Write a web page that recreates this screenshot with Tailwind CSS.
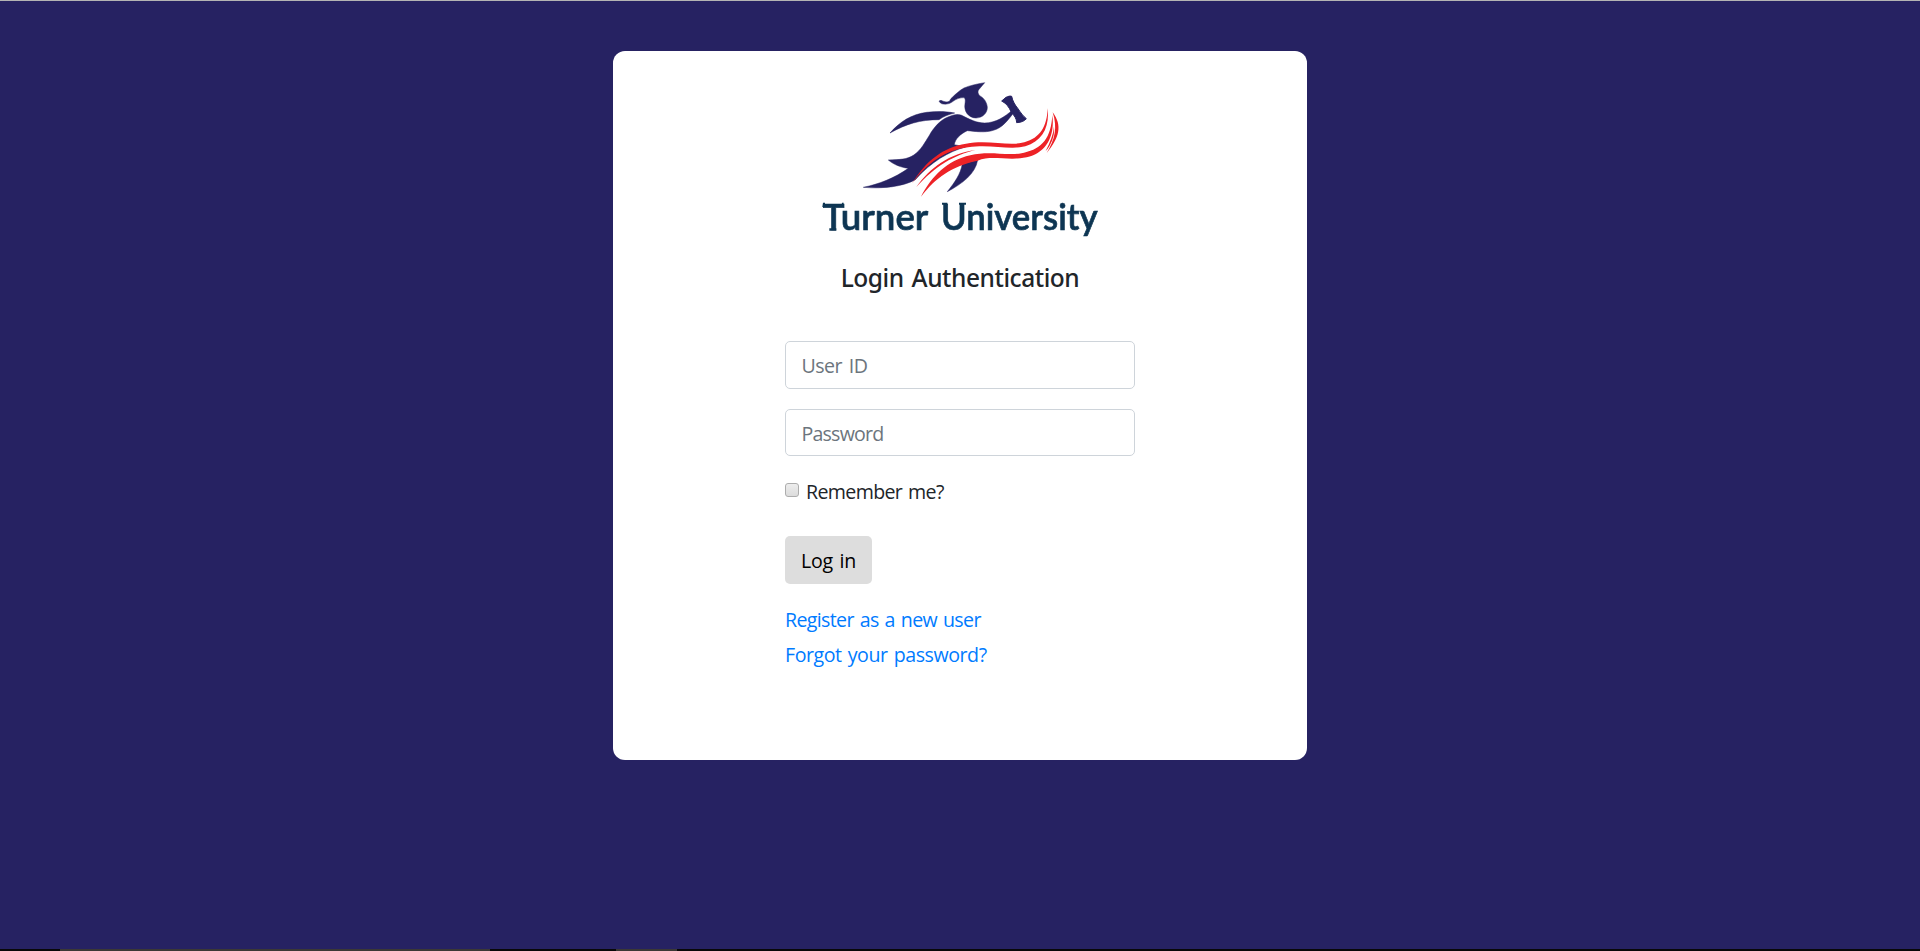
<!DOCTYPE html>
<html lang="en">
<head>
<meta charset="utf-8">
<title>Login - Turner University</title>
<script src="https://cdn.jsdelivr.net/npm/@tailwindcss/browser@4"></script>
</head>
<body class="h-screen overflow-hidden flex flex-col bg-[#262262] font-['Open_Sans','Noto_Sans',sans-serif] text-[19.6px] text-[#212529]">
<div class="h-px bg-[#b4b4b4] shrink-0"></div>
<main class="flex-1 min-h-0 pt-[50px]">
  <section class="mx-auto w-[694px] h-[709px] rounded-xl bg-white pt-[19px] flex flex-col items-center">
    <svg class="w-[300px] h-[180px] shrink-0" viewBox="0 0 900 540" role="img" aria-label="Turner University">
      <defs><filter id="soft" x="-5%" y="-5%" width="110%" height="110%"><feGaussianBlur stdDeviation="2"/></filter></defs>
      <g filter="url(#soft)">
        <g fill="#262262" stroke="#262262" stroke-width="1.5">
          <path d="M524 38C500 42 478 47 462 54C448 62 437 72 427 82C420 87 421 91 418 94C410 98 402 95 393 91L387 93C390 98 392 101 399 102C413 104 423 99 429 94C438 87 451 82 463 83C467 88 466 94 465 101C461 123 474 143 498 144C519 143 532 129 532 112C531 97 522 84 509 77C503 70 502 63 508 57Z"/>
          <path d="M240 189C270 155 304 133 350 127C380 123 410 124 434 129C414 134 400 140 387 149C330 149 288 162 240 189Z"/>
          <path d="M160 352C208 342 252 325 295 295C273 292 253 285 235 270C270 269 292 268 310 256C334 240 345 216 357 198C371 172 391 150 414 141C430 134 443 131 455 136C480 149 501 159 524 159C559 158 583 141 608 120L611 128C593 152 576 174 550 181C525 189 493 184 472 182C452 191 435 207 433 224L466 231C416 245 364 275 316 329C281 349 222 357 160 352Z"/>
          <path d="M575 93L588 82C595 79 600 77 605 79C608 94 615 105 624 116C632 128 639 138 649 146C643 153 635 157 620 158C620 146 613 137 604 127C597 111 590 101 575 93Z" stroke-width="3"/>
          <path d="M457 282L503 270C496 311 459 340 412 365C434 337 451 314 457 282Z"/>
        </g>
        <g fill="#ed2027">
          <path d="M306 341C348 271 400 232 468 221C537 208 594 230 643 217C691 204 711 169 713 115C719 173 697 213 646 229C595 242 544 221 474 232C405 241 353 278 306 341Z"/>
          <path d="M319 351C360 293 419 250 497 240C430 256 378 287 319 351Z"/>
          <path d="M333 380C365 319 411 272 481 256C543 241 590 260 642 248C697 237 723 203 727 136C735 198 709 249 650 262C593 274 546 254 503 272C425 288 377 323 333 380Z"/>
          <path d="M728 127C758 167 748 204 710 249C735 209 743 173 728 127Z"/>
          <path d="M732 170C735 199 722 227 707 243C721 216 730 192 732 170Z"/>
        </g>
        <g fill="#0b3552" font-family="Lato, sans-serif" font-weight="600" font-size="112">
          <g stroke="#0b3552" stroke-width="2">
            <text x="38" y="480" textLength="317" lengthAdjust="spacingAndGlyphs">Turner</text>
            <text x="393" y="480" textLength="470" lengthAdjust="spacingAndGlyphs">University</text>
          </g>
          <path d="M39 398H45V411H37ZM96 398H101L99 411H94ZM58 475H79V482H58ZM396 398H412V404H396ZM447 398H468V404H447Z"/>
        </g>
      </g>
    </svg>
    <h1 class="mt-[11px] h-[34px] leading-[34px] text-[24.5px] font-medium font-['Noto_Sans',sans-serif] whitespace-nowrap tracking-[-0.45px] [word-spacing:2px]">Login Authentication</h1>
    <form class="mt-[46px] w-[350px] flex flex-col items-start tracking-[-0.65px] [word-spacing:1.5px]">
      <input type="text" placeholder="User ID" class="w-full h-12 rounded-[5px] border border-[#ced4da] pl-[15.5px] pr-4 pt-px placeholder:text-[#6c757d] tracking-[-0.5px] [word-spacing:2px]">
      <input type="password" placeholder="Password" class="mt-5 w-full h-[47px] rounded-[5px] border border-[#ced4da] pl-[15.5px] pr-4 pt-px placeholder:text-[#6c757d] tracking-[-0.8px]">
      <label class="mt-[21px] h-[30px] flex items-center leading-[30px] whitespace-nowrap">
        <input type="checkbox" class="appearance-none size-[14px] -mt-1 mr-[7px] rounded-[3px] border border-[#adadad] bg-linear-to-b from-[#ededed] to-[#dcdcdc]">
        <span>Remember me?</span>
      </label>
      <button type="button" class="mt-[29px] w-[87px] h-12 pt-0.5 rounded-[5px] bg-[#dddddd] text-black tracking-[-0.3px] [word-spacing:2px] whitespace-nowrap">Log in</button>
      <a href="#" class="mt-[21px] h-[30px] leading-[30px] text-[#007bff] whitespace-nowrap">Register as a new user</a>
      <a href="#" class="mt-[5px] h-[30px] leading-[30px] text-[#007bff] tracking-[-0.45px] whitespace-nowrap">Forgot your password?</a>
    </form>
  </section>
</main>
<footer class="h-[2px] shrink-0 flex bg-[#080808]">
  <div class="ml-[60px] w-[430px] bg-[#3b3835]"></div>
  <div class="ml-[126px] w-[61px] bg-[#3b3835]"></div>
</footer>
</body>
</html>
